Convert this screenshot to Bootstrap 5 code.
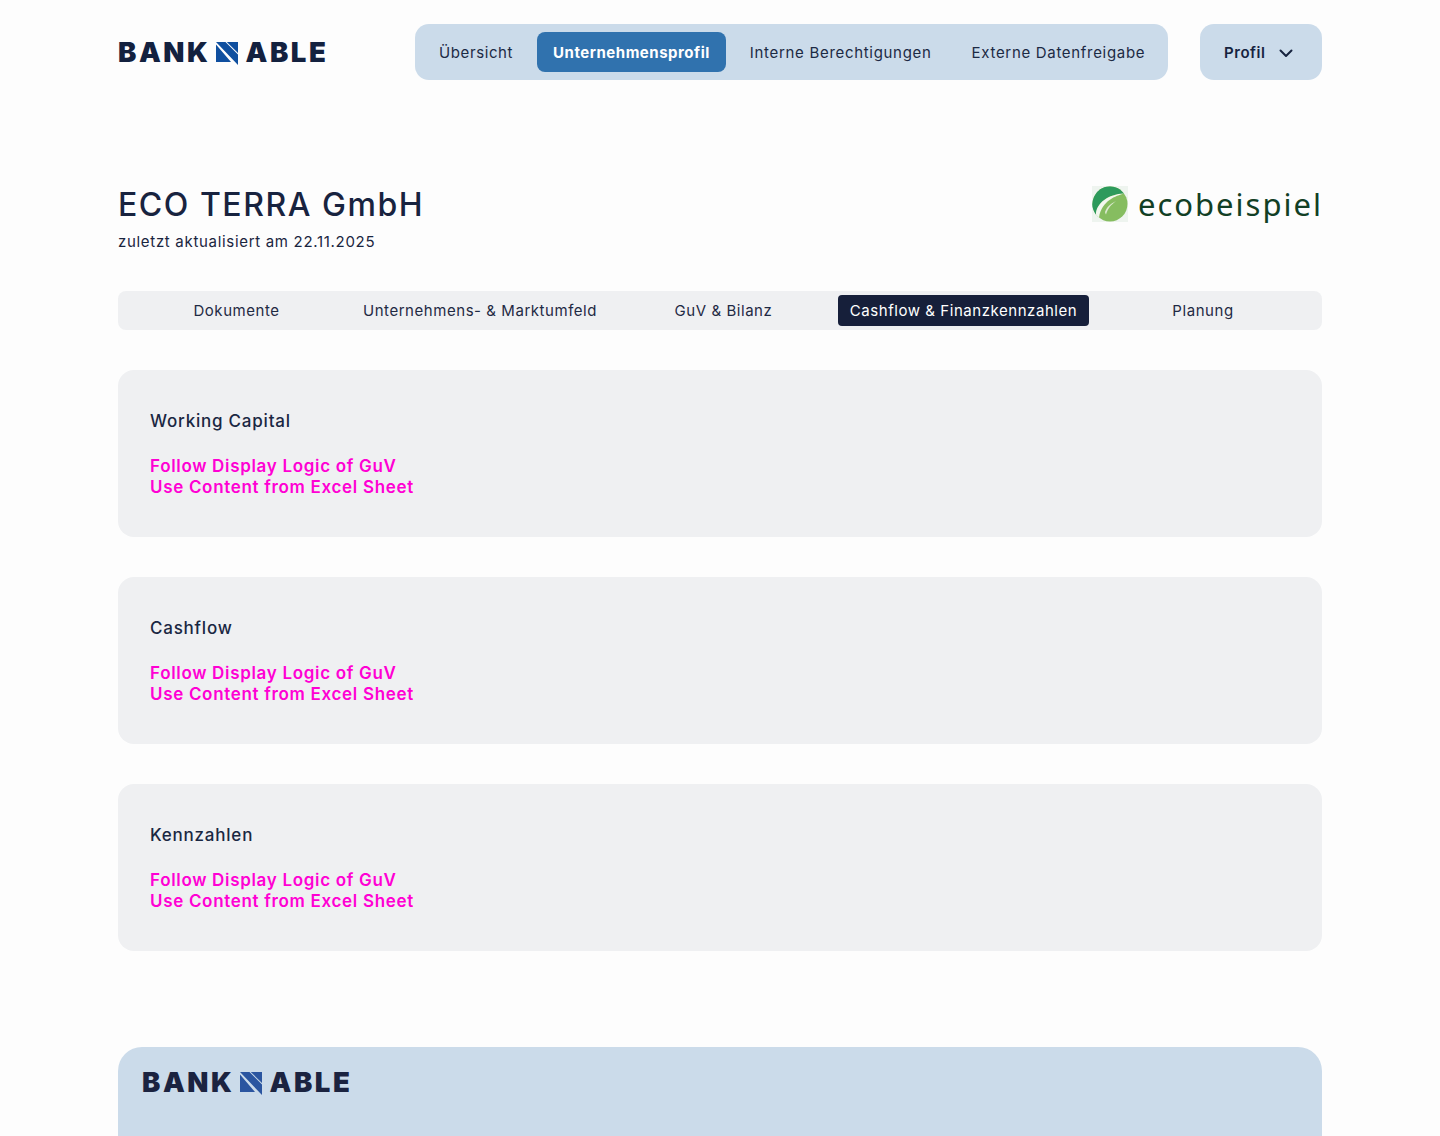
<!DOCTYPE html>
<html lang="de">
<head>
<meta charset="utf-8">
<title>Banknable</title>
<link href="https://cdn.jsdelivr.net/npm/bootstrap@5.3.0/dist/css/bootstrap.min.css" rel="stylesheet">
<style>
html,body{height:1136px;overflow:hidden}
body{background:#fdfdfd;color:#161f3a;font-family:Inter,"Liberation Sans",sans-serif}
.shell{width:1204px;margin:0 auto}
.topbar{height:56px;margin-top:24px}
.brand{display:flex;align-items:center;width:209px;font-weight:900;font-size:27.5px;letter-spacing:2.55px;line-height:1;color:#13213f}
.brand svg{width:24px;height:24px;margin:3px 6px 0 5px;flex:none}
.brand-word{display:block;margin-top:1px}
.brand-foot{color:#1b2340}
.mainnav{width:753px;height:56px;margin-left:88px;gap:8px;background:#cbdbea;border-radius:14px;padding:8px}
.mainnav a{display:flex;align-items:center;height:40px;padding:2px 16px 0;font-size:15px;letter-spacing:.6px;color:#1c2a44;text-decoration:none;border-radius:8px;white-space:nowrap}
.mainnav a.wide{letter-spacing:.69px}
.mainnav a.on{background:#3072ae;color:#fff;font-weight:700;letter-spacing:.52px}
.profilebtn{width:122px;height:56px;background:#cbdbea;border-radius:14px;padding:1px 27px 0 24px;font-size:15px;font-weight:600;letter-spacing:.55px;color:#16233f}
.profilebtn span{padding-top:1px}
.profilebtn svg{width:18px;height:18px}
.headrow{margin-top:103px}
h1.company{font-size:32px;font-weight:500;letter-spacing:1.53px;line-height:44px;margin:0;color:#18233f}
.stamp{font-size:15px;letter-spacing:.69px;line-height:20px;margin-top:5px;color:#1a2540}
.ecologo{height:38px;margin-top:2px}
.ecologo svg{width:36px;height:36px;flex:none}
.ecoword{font-family:"Noto Sans","Open Sans",sans-serif;font-size:31px;line-height:36px;letter-spacing:2px;color:#123f25;margin-left:10px;margin-right:-1px}
.subtabs{display:grid;grid-template-columns:229px 258px 229px 251px 228px;height:39px;margin-top:39px;padding:4px 5px 4px 4px;background:#eff0f2;border-radius:8px}
.subtabs a{display:flex;align-items:center;justify-content:center;padding-top:2px;font-size:15px;letter-spacing:.55px;color:#1f2a44;text-decoration:none;border-radius:4px;white-space:nowrap}
.subtabs a.on{background:#161f3a;color:#fff}
.panel{height:167px;margin-top:40px;padding:32px;background:#eff0f2;border-radius:16px}
.panel h2{font-size:17px;font-weight:550;letter-spacing:.78px;line-height:38px;margin:0;color:#1a2742}
.panel p{margin:16px 0 0;font-size:17px;font-weight:600;letter-spacing:.68px;line-height:21px;color:#ff00d4}
.foot{height:200px;margin-top:96px;background:#cbdbea;border-radius:24px 24px 0 0;padding:21px 24px}
</style>
</head>
<body>
<div class="shell">
  <header class="topbar d-flex align-items-center">
    <div class="brand"><span class="brand-word">BANK</span><svg viewBox="0 0 24 24"><path fill="#0f4f9f" d="M1 0h9.500L23 12.500V23zM1 2.500 16 20H1zM11.800 0H23v11z"/></svg><span class="brand-word">ABLE</span></div>
    <nav class="mainnav d-flex">
      <a href="#">Übersicht</a>
      <a href="#" class="on">Unternehmensprofil</a>
      <a href="#" class="wide">Interne Berechtigungen</a>
      <a href="#" class="wide">Externe Datenfreigabe</a>
    </nav>
    <button class="profilebtn btn d-flex align-items-center justify-content-between border-0 ms-auto"><span>Profil</span>
      <svg viewBox="0 0 18 18" fill="none" stroke="#16233f" stroke-width="2" stroke-linecap="round" stroke-linejoin="round"><path d="M3.500 6.500 9 12l5.500-5.500"/></svg>
    </button>
  </header>

  <section class="headrow d-flex justify-content-between align-items-start">
    <div>
      <h1 class="company">ECO TERRA GmbH</h1>
      <div class="stamp">zuletzt aktualisiert am 22.11.2025</div>
    </div>
    <div class="ecologo d-flex align-items-center">
      <svg viewBox="0 0 36 36">
        <rect width="36" height="36" fill="#eef4ef"/>
        <circle cx="18" cy="18" r="17.500" fill="#86bd60"/>
        <path fill="#2d9a5c" d="M18 .5A17.500 17.500 0 0 0 4 28.500C5 16 17 8 32 7.500A17.500 17.500 0 0 0 18 .5z"/>
        <path fill="#f2f7ee" d="M4 28.500C4 17 17 8 32 7.500 24 10 10 14 7 31.500 5.800 30.500 4.800 29.500 4 28.500z"/>
        <path fill="#dbe9cf" d="M13 26c2-5 5-8 11-11-5 4-8 7-10 13.500-.6-.8-.9-1.600-1-2.500z"/>
      </svg>
      <span class="ecoword">ecobeispiel</span>
    </div>
  </section>

  <nav class="subtabs">
    <a href="#">Dokumente</a>
    <a href="#">Unternehmens- &amp; Marktumfeld</a>
    <a href="#">GuV &amp; Bilanz</a>
    <a href="#" class="on">Cashflow &amp; Finanzkennzahlen</a>
    <a href="#">Planung</a>
  </nav>

  <section class="panel">
    <h2>Working Capital</h2>
    <p>Follow Display Logic of GuV<br>Use Content from Excel Sheet</p>
  </section>
  <section class="panel">
    <h2>Cashflow</h2>
    <p>Follow Display Logic of GuV<br>Use Content from Excel Sheet</p>
  </section>
  <section class="panel">
    <h2>Kennzahlen</h2>
    <p>Follow Display Logic of GuV<br>Use Content from Excel Sheet</p>
  </section>

  <footer class="foot">
    <div class="brand brand-foot"><span class="brand-word">BANK</span><svg viewBox="0 0 24 24"><path fill="#2a55a0" d="M1 0h9.500L23 12.500V23zM1 2.500 16 20H1zM11.800 0H23v11z"/></svg><span class="brand-word">ABLE</span></div>
  </footer>
</div>
<script src="https://cdn.jsdelivr.net/npm/bootstrap@5.3.0/dist/js/bootstrap.bundle.min.js"></script>
</body>
</html>
